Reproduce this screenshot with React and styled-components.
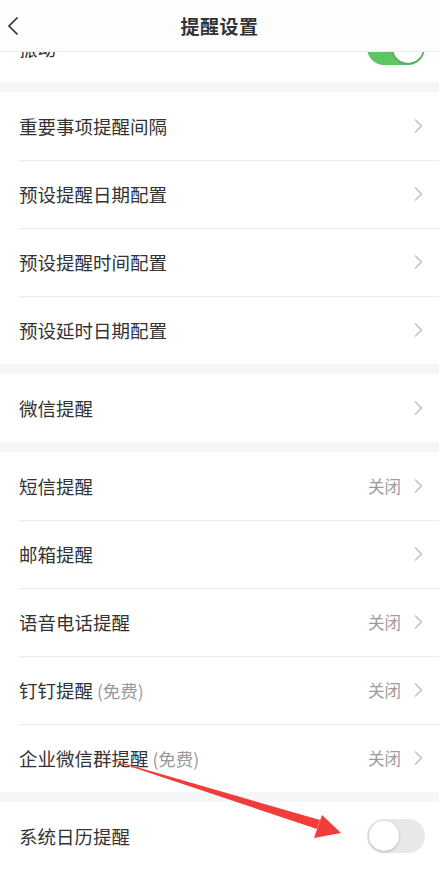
import React from 'react';
import styled, { createGlobalStyle } from 'styled-components';

const GlobalStyle = createGlobalStyle`
  html, body {
    margin: 0;
    padding: 0;
    background: #f5f6f8;
  }
  body {
    font-family: "Noto Sans CJK SC", "Noto Sans", sans-serif;
    -webkit-font-smoothing: antialiased;
  }
`;

const Page = styled.div`
  position: relative;
  width: 439px;
  height: 876px;
  overflow: hidden;
  background: #f5f6f8;
`;

const Header = styled.header`
  position: absolute;
  top: 0;
  left: 0;
  right: 0;
  z-index: 2;
  height: 51px;
  display: grid;
  grid-template-columns: 60px 1fr 60px;
  align-items: center;
  background: #fdfdfd;
  border-bottom: 1px solid #ededed;
`;

const BackButton = styled.button`
  border: 0;
  background: none;
  padding: 0 0 0 6px;
  height: 51px;
  display: flex;
  align-items: center;
  justify-content: flex-start;
`;

const Title = styled.h1`
  margin: 0;
  text-align: center;
  font-size: 19px;
  font-weight: 700;
  color: #333;
  letter-spacing: 0.5px;
`;

const Content = styled.div`
  height: 100%;
  box-sizing: border-box;
  display: flex;
  flex-direction: column;
  gap: 10px;
  padding-top: 14px;
`;

const Section = styled.section`
  background: #fff;
  display: flex;
  flex-direction: column;

  &:last-child {
    flex: 1;
  }
`;

const Row = styled.div`
  position: relative;
  height: 68px;
  flex-shrink: 0;
  box-sizing: border-box;
  display: flex;
  align-items: center;
  padding: 0 16px 0 19px;

  & + &::before {
    content: '';
    position: absolute;
    top: 0;
    left: 19px;
    right: 0;
    height: 1px;
    background: #ececec;
  }
`;

const Label = styled.span`
  flex: 1;
  font-size: 18.5px;
  color: #333;
`;

const Note = styled.span`
  font-size: 17.5px;
  color: #9a9a9a;
`;

const Value = styled.span`
  font-size: 16.5px;
  color: #9c9c9c;
  margin-right: 12px;
`;

const Switch = styled.span`
  position: relative;
  width: 58px;
  height: 34px;
  border-radius: 17px;
  margin-right: -2px;
  background: ${p => (p.on ? '#5ec564' : '#e8e8ea')};
  box-sizing: border-box;

  &::after {
    content: '';
    position: absolute;
    top: 2px;
    left: ${p => (p.on ? '26px' : '2px')};
    width: 30px;
    height: 30px;
    border-radius: 50%;
    background: #fff;
    box-shadow: 0 1px 3px rgba(0, 0, 0, 0.22);
  }
`;

const Arrow = styled.svg`
  position: absolute;
  top: 0;
  left: 0;
  z-index: 3;
  pointer-events: none;
`;

function Chevron() {
  return (
    <svg width="10" height="16" viewBox="0 0 10 16">
      <path d="M2 1.5 L8.5 8 L2 14.5" fill="none" stroke="#c4c4c4" strokeWidth="1.6" />
    </svg>
  );
}

function SettingRow({ label, note, value, toggle, on }) {
  return (
    <Row>
      <Label>
        {label}
        {note && <Note> {note}</Note>}
      </Label>
      {value && <Value>{value}</Value>}
      {toggle ? <Switch on={on} /> : <Chevron />}
    </Row>
  );
}

const sections = [
  [{ label: '振动', toggle: true, on: true }],
  [
    { label: '重要事项提醒间隔' },
    { label: '预设提醒日期配置' },
    { label: '预设提醒时间配置' },
    { label: '预设延时日期配置' }
  ],
  [{ label: '微信提醒' }],
  [
    { label: '短信提醒', value: '关闭' },
    { label: '邮箱提醒' },
    { label: '语音电话提醒', value: '关闭' },
    { label: '钉钉提醒', note: '(免费)', value: '关闭' },
    { label: '企业微信群提醒', note: '(免费)', value: '关闭' }
  ],
  [{ label: '系统日历提醒', toggle: true, on: false }]
];

export default function App() {
  return (
    <Page>
      <GlobalStyle />
      <Header>
        <BackButton aria-label="返回">
          <svg width="14" height="20" viewBox="0 0 14 20">
            <path d="M11.5 1.5 L3 10 L11.5 18.5" fill="none" stroke="#333" strokeWidth="1.7" />
          </svg>
        </BackButton>
        <Title>提醒设置</Title>
        <span />
      </Header>

      <Content>
        {sections.map((rows, i) => (
          <Section key={i}>
            {rows.map(row => (
              <SettingRow key={row.label} {...row} />
            ))}
          </Section>
        ))}
      </Content>

      <Arrow width="439" height="876" viewBox="0 0 439 876">
        <polygon points="102,757 320,820 317,829" fill="#f23b3b" />
        <polygon points="322,815 314,838 341,833" fill="#f23b3b" />
      </Arrow>
    </Page>
  );
}
